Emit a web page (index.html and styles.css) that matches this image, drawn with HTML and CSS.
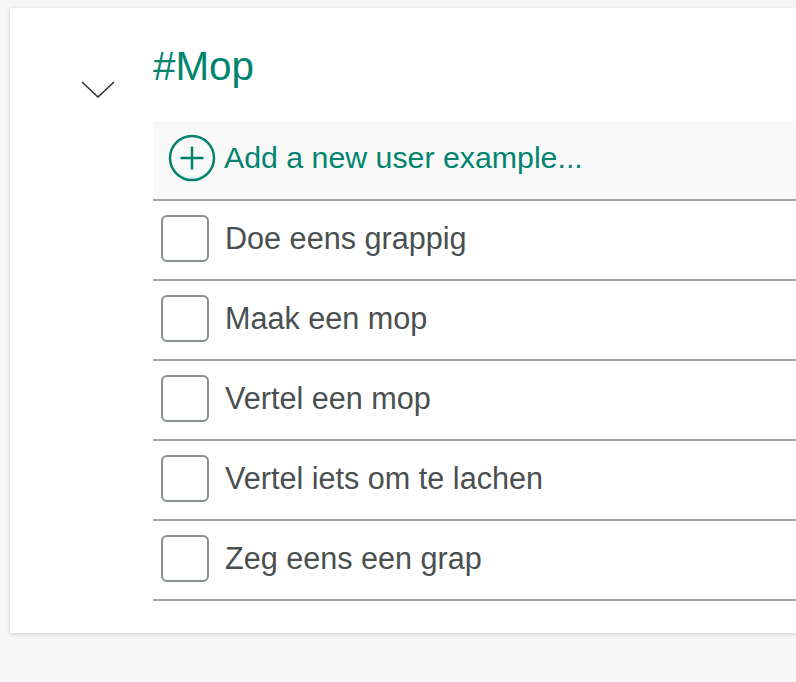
FILE: index.html
```html
<!DOCTYPE html>
<html>
<head>
<meta charset="utf-8">
<link rel="stylesheet" href="styles.css">
</head>
<body>
<div class="card">
  <div class="toggle-col">
    <svg class="chevron" width="34" height="17" viewBox="0 0 34 17">
      <polyline points="1,1 17,16 33,1" fill="none" stroke="#333" stroke-width="1.6"/>
    </svg>
  </div>
  <div class="main-col">
    <h1 class="title">#Mop</h1>
    <ul class="list">
      <li class="row add-row">
        <svg class="plus" width="48" height="48" viewBox="0 0 48 48">
          <circle cx="24" cy="24" r="22" fill="none" stroke="#00846f" stroke-width="2.5"/>
          <line x1="12.5" y1="24" x2="35.5" y2="24" stroke="#00846f" stroke-width="2.5"/>
          <line x1="24" y1="12.5" x2="24" y2="35.5" stroke="#00846f" stroke-width="2.5"/>
        </svg>
        <span class="add-text">Add a new user example...</span>
      </li>
      <li class="row item-row"><span class="box"></span><span class="item-text">Doe eens grappig</span></li>
      <li class="row item-row"><span class="box"></span><span class="item-text">Maak een mop</span></li>
      <li class="row item-row"><span class="box"></span><span class="item-text">Vertel een mop</span></li>
      <li class="row item-row"><span class="box"></span><span class="item-text">Vertel iets om te lachen</span></li>
      <li class="row item-row"><span class="box"></span><span class="item-text">Zeg eens een grap</span></li>
    </ul>
  </div>
</div>
</body>
</html>
```
FILE: styles.css
```css
html, body {
  margin: 0;
  padding: 0;
  background: #f7f7f7;
  overflow: hidden;
  width: 796px;
  height: 682px;
}
body {
  padding: 8px 0 0 10px;
  box-sizing: border-box;
  font-family: "Liberation Sans", Arial, sans-serif;
}
.card {
  width: 786px;
  height: 625px;
  background: #fff;
  box-shadow: 0 1px 4px rgba(0, 0, 0, 0.18);
  display: flex;
  box-sizing: border-box;
}
.toggle-col {
  width: 143px;
  flex: none;
}
.chevron {
  display: block;
  margin: 73px 0 0 71px;
}
.main-col {
  flex: 1;
}
.title {
  margin: 34px 0 31px 0;
  font-size: 40.4px;
  line-height: 48px;
  font-weight: normal;
  color: #00846f;
}
.list {
  list-style: none;
  margin: 0;
  padding: 0;
}
.row {
  display: flex;
  align-items: center;
  padding-bottom: 4px;
  box-sizing: border-box;
  height: 80px;
  border-bottom: 2px solid #9ea4a2;
}
.add-row {
  background: #f9f9f9;
  padding-left: 15px;
}
.plus {
  display: block;
  flex: none;
}
.add-text {
  margin-left: 8px;
  font-size: 30.3px;
  line-height: 36px;
  color: #00846f;
}
.item-row {
  padding-left: 8px;
}
.box {
  width: 48px;
  height: 47px;
  box-sizing: border-box;
  border: 2px solid #88918f;
  border-radius: 6px;
  flex: none;
}
.item-text {
  margin-left: 16px;
  font-size: 30.6px;
  line-height: 36px;
  color: #4a4f4f;
}
```
